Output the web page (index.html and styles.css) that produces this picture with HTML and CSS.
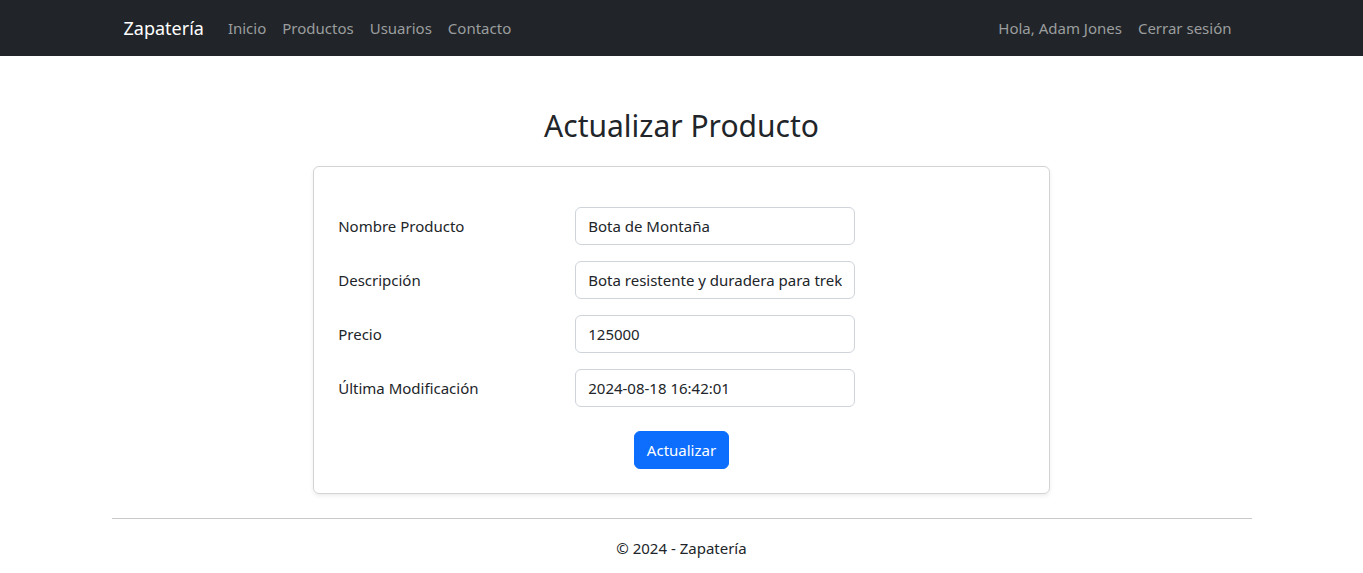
FILE: index.html
```html
<!DOCTYPE html>
<html lang="es">
<head>
<meta charset="utf-8">
<meta name="viewport" content="width=device-width, initial-scale=1">
<title>Actualizar Producto - Zapatería</title>
<link rel="stylesheet" href="styles.css">
</head>
<body>
<header class="navbar">
  <nav class="container navbar-inner">
    <a class="brand" href="#">Zapatería</a>
    <ul class="nav-list">
      <li><a class="nav-link" href="#">Inicio</a></li>
      <li><a class="nav-link" href="#">Productos</a></li>
      <li><a class="nav-link" href="#">Usuarios</a></li>
      <li><a class="nav-link" href="#">Contacto</a></li>
    </ul>
    <ul class="nav-list nav-end">
      <li><span class="nav-link">Hola, Adam Jones</span></li>
      <li><a class="nav-link" href="#">Cerrar sesión</a></li>
    </ul>
  </nav>
</header>
<main class="container">
  <h1 class="title">Actualizar Producto</h1>
  <form class="card">
    <div class="row">
      <label class="label" for="nombre">Nombre Producto</label>
      <input class="control" id="nombre" type="text" value="Bota de Montaña">
    </div>
    <div class="row">
      <label class="label" for="descripcion">Descripción</label>
      <input class="control" id="descripcion" type="text" value="Bota resistente y duradera para trekking">
    </div>
    <div class="row">
      <label class="label" for="precio">Precio</label>
      <input class="control" id="precio" type="text" value="125000">
    </div>
    <div class="row">
      <label class="label" for="modificacion">Última Modificación</label>
      <input class="control" id="modificacion" type="text" value="2024-08-18 16:42:01">
    </div>
    <div class="actions">
      <button class="button" type="submit">Actualizar</button>
    </div>
  </form>
</main>
<footer class="container footer">
  <p class="copyright">© 2024 - Zapatería</p>
</footer>
</body>
</html>
```
FILE: styles.css
```css
*, *::before, *::after {
  box-sizing: border-box;
}

body {
  margin: 0;
  background: #fff;
  color: #212529;
  font-family: "Segoe UI", "Noto Sans", "Open Sans", sans-serif;
  font-size: 15px;
  line-height: 24px;
}

.container {
  width: 100%;
  max-width: 1140px;
  margin: 0 auto;
  padding: 0 12px;
}

.navbar {
  background: #212529;
  padding: 8px 0;
}

.navbar-inner {
  display: flex;
  align-items: center;
}

.brand {
  margin-right: 16px;
  padding: 5px 0;
  color: #fff;
  font-size: 18px;
  line-height: 30px;
  text-decoration: none;
}

.nav-list {
  display: flex;
  margin: 0;
  padding: 0;
  list-style: none;
}

.nav-end {
  margin-left: auto;
}

.nav-link {
  display: block;
  padding: 8px;
  color: #9b9d9e;
  text-decoration: none;
}

.title {
  margin: 50px 0 20px;
  font-size: 30px;
  font-weight: 400;
  line-height: 40px;
  text-align: center;
}

.card {
  width: 66%;
  margin: 0 auto;
  padding: 40px 24px 24px;
  border: 1px solid #d3d3d4;
  border-radius: 6px;
  box-shadow: 0 2px 4px rgba(0, 0, 0, 0.075);
}

.row {
  display: grid;
  grid-template-columns: 213px 280px;
  column-gap: 24px;
  align-items: center;
  margin-bottom: 16px;
}

.control {
  width: 100%;
  height: 38px;
  padding: 6px 12px;
  border: 1px solid #ced4da;
  border-radius: 6px;
  background: #fff;
  color: inherit;
  font: inherit;
}

.actions {
  display: flex;
  justify-content: center;
  padding-top: 8px;
}

.button {
  padding: 6px 12px;
  border: 1px solid #0d6efd;
  border-radius: 6px;
  background: #0d6efd;
  color: #fff;
  font: inherit;
}

.footer {
  margin-top: 24px;
  padding: 0;
}

.copyright {
  margin: 0;
  padding: 17px 0 13px;
  border-top: 1px solid #c8c9ca;
  text-align: center;
}
```
